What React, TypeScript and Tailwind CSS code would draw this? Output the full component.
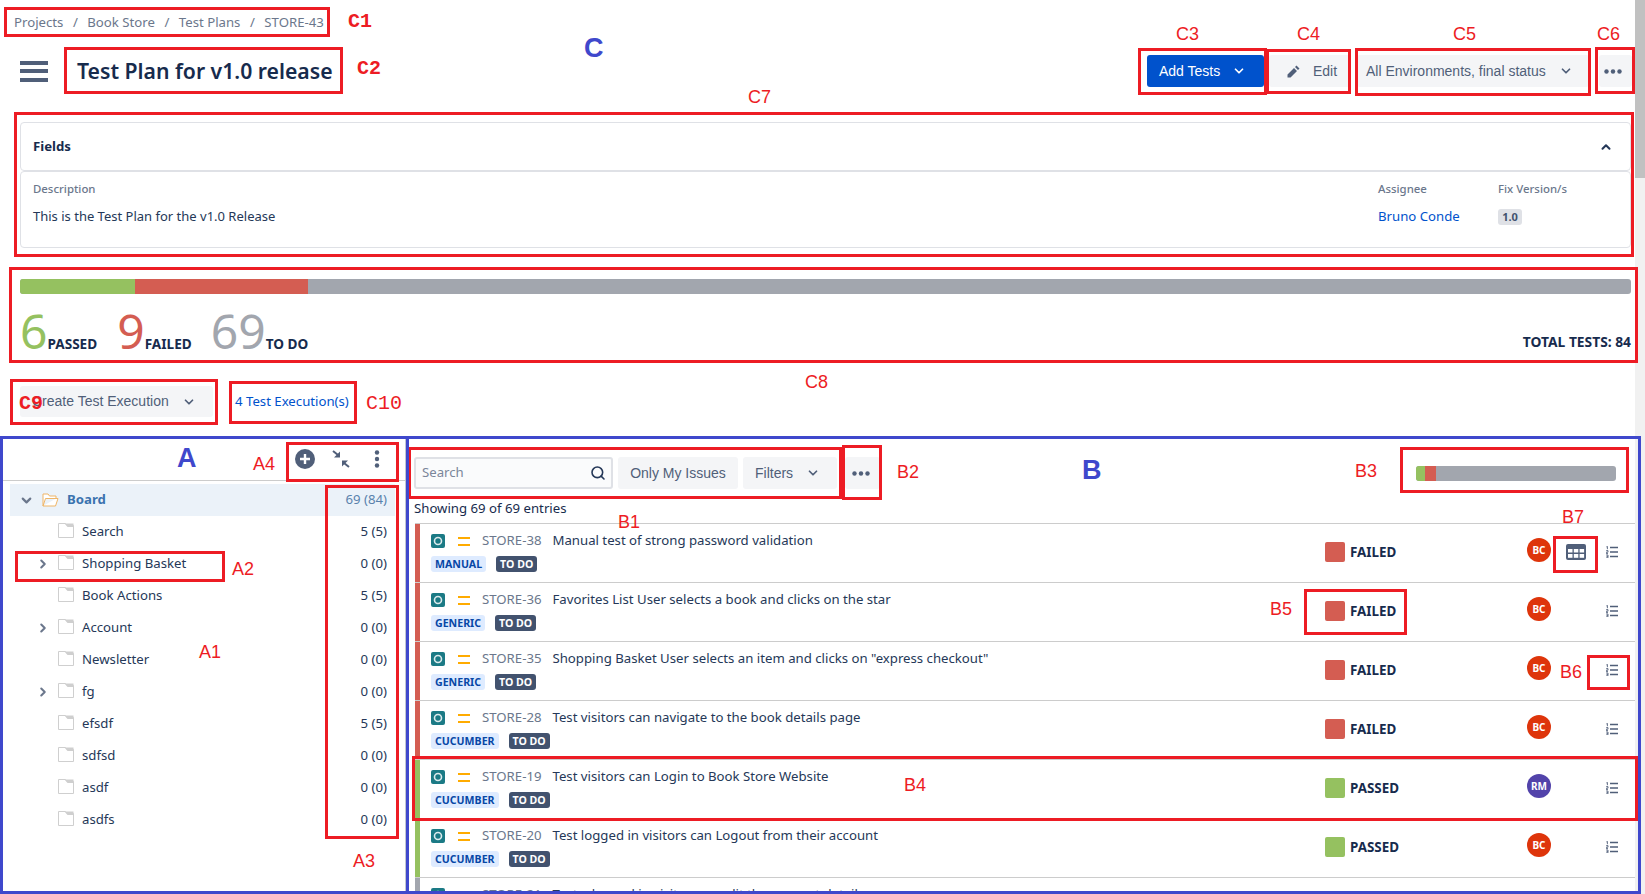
import { ChevronDown, ChevronRight, ChevronUp, Search } from 'lucide-react';

type Row = {
  key: string;
  title: string;
  kind: string;
  status: 'FAILED' | 'PASSED' | 'TO DO';
  user: string;
  grid?: boolean;
};

const rows: Row[] = [
  { key: 'STORE-38', title: 'Manual test of strong password validation', kind: 'MANUAL', status: 'FAILED', user: 'BC', grid: true },
  { key: 'STORE-36', title: 'Favorites List User selects a book and clicks on the star', kind: 'GENERIC', status: 'FAILED', user: 'BC' },
  { key: 'STORE-35', title: 'Shopping Basket User selects an item and clicks on "express checkout"', kind: 'GENERIC', status: 'FAILED', user: 'BC' },
  { key: 'STORE-28', title: 'Test visitors can navigate to the book details page', kind: 'CUCUMBER', status: 'FAILED', user: 'BC' },
  { key: 'STORE-19', title: 'Test visitors can Login to Book Store Website', kind: 'CUCUMBER', status: 'PASSED', user: 'RM' },
  { key: 'STORE-20', title: 'Test logged in visitors can Logout from their account', kind: 'CUCUMBER', status: 'PASSED', user: 'BC' },
  { key: 'STORE-21', title: 'Test a logged in visitor can edit the account details', kind: 'CUCUMBER', status: 'TO DO', user: 'BC' },
];

const folders = [
  { name: 'Search', count: '5 (5)' },
  { name: 'Shopping Basket', count: '0 (0)', more: true },
  { name: 'Book Actions', count: '5 (5)' },
  { name: 'Account', count: '0 (0)', more: true },
  { name: 'Newsletter', count: '0 (0)' },
  { name: 'fg', count: '0 (0)', more: true },
  { name: 'efsdf', count: '5 (5)' },
  { name: 'sdfsd', count: '0 (0)' },
  { name: 'asdf', count: '0 (0)' },
  { name: 'asdfs', count: '0 (0)' },
];

function FolderIcon() {
  return (
    <svg width="16" height="15" viewBox="0 0 16 15" className="shrink-0 mb-[3px]" aria-hidden="true">
      <path d="M.5 .5H7.5L9 2.5H15.5V14.5H.5Z" fill="#fff" stroke="#cfcfcf" />
      <path d="M6.5 .5H15.5V4H9.5Z" fill="#cfcfcf" />
    </svg>
  );
}

function OpenFolderIcon() {
  return (
    <svg width="17" height="14" viewBox="0 0 17 14" className="shrink-0" aria-hidden="true">
      <path d="M1 13V1H6L7.5 3H14V5.5M1 13H13.5L16 5.5H3.5L1 13Z" fill="#fff" stroke="#efb566" strokeWidth="1" />
    </svg>
  );
}

function TestIcon() {
  return (
    <svg width="14" height="14" viewBox="0 0 14 14" className="shrink-0" aria-hidden="true">
      <rect width="14" height="14" rx="2" fill="#1b7a85" />
      <circle cx="7" cy="7" r="3.5" fill="none" stroke="#fff" strokeWidth="1.6" opacity="0.85" />
      <circle cx="7" cy="7" r="1.2" fill="#1b7a85" />
    </svg>
  );
}

function PriorityIcon() {
  return (
    <svg width="12" height="9" viewBox="0 0 12 9" className="shrink-0" aria-hidden="true">
      <rect width="12" height="2" fill="#ffab00" />
      <rect y="7" width="12" height="2" fill="#ffab00" />
    </svg>
  );
}

function GridIcon() {
  return (
    <svg width="20" height="16" viewBox="0 0 20 16" aria-hidden="true">
      <rect width="20" height="16" rx="2" fill="#505f79" />
      <rect x="2" y="5" width="4.5" height="3.5" fill="#fff" />
      <rect x="7.8" y="5" width="4.5" height="3.5" fill="#fff" />
      <rect x="13.6" y="5" width="4.5" height="3.5" fill="#fff" />
      <rect x="2" y="10" width="4.5" height="3.8" fill="#fff" />
      <rect x="7.8" y="10" width="4.5" height="3.8" fill="#fff" />
      <rect x="13.6" y="10" width="4.5" height="3.8" fill="#fff" />
    </svg>
  );
}

function ListIcon() {
  return (
    <svg width="12" height="12" viewBox="0 0 12 12" aria-hidden="true">
      <path d="M.4 .9L1.4 .3V3.2M.2 4.6H2V6.2H.2V7.6H2M.2 9H2V11.8H.2M.5 10.4H2" fill="none" stroke="#505f79" strokeWidth="0.9" />
      <path d="M4 1.5H12M4 6H12M4 10.5H12" stroke="#505f79" strokeWidth="1.6" />
    </svg>
  );
}

function Dots() {
  return (
    <svg width="18" height="5" viewBox="0 0 18 5" aria-hidden="true">
      <circle cx="2.5" cy="2.5" r="2.2" fill="#505f79" />
      <circle cx="9" cy="2.5" r="2.2" fill="#505f79" />
      <circle cx="15.5" cy="2.5" r="2.2" fill="#505f79" />
    </svg>
  );
}

function Box({ className }: { className: string }) {
  return <div className={`absolute border-[3px] border-[#ed1c24] pointer-events-none ${className}`} />;
}

function Label({ className, children }: { className: string; children: string }) {
  return (
    <span className={`absolute leading-none whitespace-nowrap text-[18px] text-[#ed1c24] font-['Liberation_Sans',sans-serif] ${className}`}>
      {children}
    </span>
  );
}

function Annotations() {
  return (
    <>
      <Box className="left-[4px] top-[7px] w-[326px] h-[30px]" />
      <Box className="left-[64px] top-[47px] w-[279px] h-[47px]" />
      <Box className="left-[1138px] top-[48px] w-[129px] h-[47px]" />
      <Box className="left-[1266px] top-[49px] w-[85px] h-[45px]" />
      <Box className="left-[1355px] top-[48px] w-[236px] h-[48px]" />
      <Box className="left-[1595px] top-[47px] w-[40px] h-[47px]" />
      <Box className="left-[14px] top-[112px] w-[1620px] h-[145px]" />
      <Box className="left-[9px] top-[267px] w-[1629px] h-[96px]" />
      <Box className="left-[10px] top-[379px] w-[208px] h-[46px]" />
      <Box className="left-[229px] top-[381px] w-[128px] h-[43px]" />
      <Box className="left-[15px] top-[551px] w-[210px] h-[31px]" />
      <Box className="left-[325px] top-[485px] w-[74px] h-[354px]" />
      <Box className="left-[286px] top-[442px] w-[113px] h-[40px]" />
      <Box className="left-[408px] top-[447px] w-[434px] h-[52px]" />
      <Box className="left-[842px] top-[445px] w-[40px] h-[55px]" />
      <Box className="left-[1400px] top-[447px] w-[229px] h-[46px]" />
      <Box className="left-[412px] top-[756px] w-[1226px] h-[65px]" />
      <Box className="left-[1304px] top-[589px] w-[103px] h-[46px]" />
      <Box className="left-[1587px] top-[655px] w-[43px] h-[35px]" />
      <Box className="left-[1553px] top-[536px] w-[45px] h-[37px]" />

      <div className="absolute left-0 top-[436px] w-[409px] h-[458px] border-[3px] border-[#3f48cc] pointer-events-none" />
      <div className="absolute left-[406px] top-[436px] w-[1235px] h-[458px] border-[3px] border-[#3f48cc] pointer-events-none" />

      <Label className="left-[348px] top-[12px] !text-[20px] font-bold !font-['Liberation_Mono',monospace]">C1</Label>
      <Label className="left-[357px] top-[59px] !text-[20px] font-bold !font-['Liberation_Mono',monospace]">C2</Label>
      <Label className="left-[1176px] top-[25px]">C3</Label>
      <Label className="left-[1297px] top-[25px]">C4</Label>
      <Label className="left-[1453px] top-[25px]">C5</Label>
      <Label className="left-[1597px] top-[25px]">C6</Label>
      <Label className="left-[748px] top-[88px]">C7</Label>
      <Label className="left-[805px] top-[373px]">C8</Label>
      <Label className="left-[19px] top-[394px] !text-[20px] font-bold !font-['Liberation_Mono',monospace]">C9</Label>
      <Label className="left-[366px] top-[394px] !text-[20px] !font-['Liberation_Mono',monospace]">C10</Label>
      <Label className="left-[584px] top-[35px] !text-[27px] font-bold !text-[#3f48cc]">C</Label>
      <Label className="left-[177px] top-[445px] !text-[27px] font-bold !text-[#3f48cc]">A</Label>
      <Label className="left-[1082px] top-[457px] !text-[27px] font-bold !text-[#3f48cc]">B</Label>
      <Label className="left-[253px] top-[455px]">A4</Label>
      <Label className="left-[232px] top-[560px]">A2</Label>
      <Label className="left-[199px] top-[643px]">A1</Label>
      <Label className="left-[353px] top-[852px]">A3</Label>
      <Label className="left-[618px] top-[513px]">B1</Label>
      <Label className="left-[897px] top-[463px]">B2</Label>
      <Label className="left-[1355px] top-[462px]">B3</Label>
      <Label className="left-[904px] top-[776px]">B4</Label>
      <Label className="left-[1270px] top-[600px]">B5</Label>
      <Label className="left-[1560px] top-[663px]">B6</Label>
      <Label className="left-[1562px] top-[508px]">B7</Label>
    </>
  );
}

function TreePanel() {
  return (
    <aside className="w-[406px] shrink-0 border-r border-t border-[#c1c7d0]">
      <div className="h-[44px] border-b border-[#ccc] flex items-center justify-end pr-[25px]">
        <svg width="20" height="20" viewBox="0 0 20 20" aria-hidden="true">
          <circle cx="10" cy="10" r="10" fill="#505f79" />
          <path d="M10 5V15M5 10H15" stroke="#fff" strokeWidth="2.4" />
        </svg>
        <svg width="18" height="18" viewBox="0 0 18 18" className="ml-[17px]" aria-hidden="true">
          <path d="M1 1L6 5" stroke="#505f79" strokeWidth="2" />
          <path d="M8 7.5H2L8 1.5Z" fill="#505f79" />
          <path d="M17 17L12 13" stroke="#505f79" strokeWidth="2" />
          <path d="M10 10.5H16L10 16.5Z" fill="#505f79" />
        </svg>
        <svg width="6" height="18" viewBox="0 0 6 18" className="ml-[24px]" aria-hidden="true">
          <circle cx="3" cy="2.5" r="2.2" fill="#505f79" />
          <circle cx="3" cy="9" r="2.2" fill="#505f79" />
          <circle cx="3" cy="15.5" r="2.2" fill="#505f79" />
        </svg>
      </div>
      <div className="pt-[3px] text-[13.2px] text-[#253858]">
        <div className="mx-[10px] h-[32px] bg-[#ebf2f9] flex items-center pr-[8px]">
          <ChevronDown size={15} strokeWidth={3.5} className="ml-[9px] text-[#6b778c]" />
          <span className="ml-[8px] flex">
            <OpenFolderIcon />
          </span>
          <span className="ml-[8px] font-bold text-[#3b73af]">Board</span>
          <span className="ml-auto text-[#5a82ad]">69 (84)</span>
        </div>
        {folders.map((f) => (
          <div key={f.name} className="mx-[10px] h-[32px] flex items-center pr-[8px]">
            <span className="w-[48px] flex justify-end pr-[8px] shrink-0">
              {f.more && <ChevronRight size={14} strokeWidth={3.5} className="text-[#6b778c]" />}
            </span>
            <FolderIcon />
            <span className="ml-[8px]">{f.name}</span>
            <span className="ml-auto">{f.count}</span>
          </div>
        ))}
      </div>
    </aside>
  );
}

function IssueRow({ row }: { row: Row }) {
  const bar = row.status === 'FAILED' ? 'bg-[#d45d52]' : row.status === 'PASSED' ? 'bg-[#95c160]' : 'bg-[#a2a6ae]';
  return (
    <div className="h-[59px] flex border-t border-[#ccc]">
      <div className={`w-[5px] shrink-0 ${bar}`} />
      <div className="w-[905px] shrink-0 pl-[11px] pt-[9px]">
        <div className="h-[16px] flex items-center">
          <TestIcon />
          <span className="ml-[13px] flex">
            <PriorityIcon />
          </span>
          <span className="ml-[12px] text-[#6b778c]">{row.key}</span>
          <span className="ml-[11px] text-[#253858] whitespace-nowrap">{row.title}</span>
        </div>
        <div className="mt-[7px] h-[16px] flex items-center text-[10.6px] font-bold leading-none">
          <span className="h-[16px] px-[4px] flex items-center rounded-[3px] bg-[#deebff] text-[#0747a6]">{row.kind}</span>
          <span className="ml-[10px] h-[16px] px-[4px] flex items-center rounded-[3px] bg-[#42526e] text-white">TO DO</span>
        </div>
      </div>
      <div className="w-[202px] shrink-0 flex items-center pb-[2px]">
        <span className={`w-[20px] h-[20px] rounded-[2px] ${bar}`} />
        <span className="ml-[5px] text-[13.4px] font-bold text-[#172b4d]">{row.status}</span>
      </div>
      <div className="w-[24px] shrink-0 pt-[14px]">
        <div className={`w-[24px] h-[24px] rounded-full flex items-center justify-center text-[10px] font-bold text-white ${row.user === 'RM' ? 'bg-[#5243aa]' : 'bg-[#de350b]'}`}>
          {row.user}
        </div>
      </div>
      <div className="w-[55px] shrink-0 pl-[15px] flex items-center pb-[2px]">{row.grid && <GridIcon />}</div>
      <div className="flex items-center pb-[2px]">
        <ListIcon />
      </div>
    </div>
  );
}

function TestsPanel() {
  return (
    <section className="flex-1 min-w-0 h-[458px] overflow-hidden text-[13.2px]">
      <div className="pl-[8px] pt-[21px] flex items-center">
        <div className="w-[199px] h-[32px] border-2 border-[#dfe1e6] rounded-[3px] bg-[#fafbfc] flex items-center pl-[6px] pr-[5px]">
          <span className="text-[#7a869a]">Search</span>
          <Search size={16} strokeWidth={2.4} className="ml-auto text-[#253858]" />
        </div>
        <div className="ml-[5px] w-[120px] h-[32px] rounded-[3px] bg-[#f4f5f7] flex items-center justify-center text-[14px] text-[#505f79] font-['Liberation_Sans',sans-serif]">Only My Issues</div>
        <div className="ml-[5px] w-[94px] h-[32px] rounded-[3px] bg-[#f4f5f7] flex items-center pl-[12px] text-[14px] text-[#505f79] font-['Liberation_Sans',sans-serif]">
          Filters
          <ChevronDown size={14} strokeWidth={3} className="ml-[13px]" />
        </div>
        <div className="ml-[8px] w-[35px] h-[32px] rounded-[3px] bg-[#f4f5f7] flex items-center justify-center pr-[4px]">
          <Dots />
        </div>
        <div className="ml-auto mr-[19px] w-[200px] h-[15px] rounded-[3px] overflow-hidden flex bg-[#a2a6ae]">
          <div className="w-[9px] bg-[#95c160]" />
          <div className="w-[11px] bg-[#d45d52]" />
        </div>
      </div>
      <div className="pl-[8px] pt-[5px] h-[34px] flex items-center text-[#172b4d]">Showing 69 of 69 entries</div>
      <div className="ml-[9px]">
        {rows.map((r) => (
          <IssueRow key={r.key} row={r} />
        ))}
      </div>
    </section>
  );
}

export default function App() {
  return (
    <div className="relative w-[1645px] h-[894px] overflow-hidden bg-white flex font-['Noto_Sans',sans-serif] text-[13.2px] text-[#172b4d]">
      <main className="w-[1635px] shrink-0">
        <nav className="h-[46px] pl-[14px] pb-[1px] flex items-center gap-[9.5px] text-[#6b778c]">
          <span>Projects</span>
          <span>/</span>
          <span>Book Store</span>
          <span>/</span>
          <span>Test Plans</span>
          <span>/</span>
          <span>STORE-43</span>
        </nav>

        <header className="h-[50px] flex items-center pr-[3px]">
          <div className="ml-[20px] w-[28px] h-[21px] flex flex-col justify-between">
            <span className="h-[4px] bg-[#505f79]" />
            <span className="h-[4px] bg-[#505f79]" />
            <span className="h-[4px] bg-[#505f79]" />
          </div>
          <h1 className="ml-[29px] text-[21.2px] font-semibold text-[#172b4d]">Test Plan for v1.0 release</h1>
          <div className="ml-auto flex items-center font-['Liberation_Sans',sans-serif] text-[14px]">
            <button className="w-[117px] h-[32px] rounded-[3px] bg-[#0052cc] text-white flex items-center pl-[12px]">
              Add Tests
              <ChevronDown size={14} strokeWidth={3} className="ml-[12px]" />
            </button>
            <button className="ml-[5px] w-[81px] h-[32px] rounded-[3px] bg-[#f4f5f7] text-[#505f79] flex items-center pl-[18px]">
              <svg width="13" height="13" viewBox="0 0 13 13" aria-hidden="true">
                <path d="M9.5 .5L12.5 3.5L11 5L8 2ZM7 3L10 6L3.5 12.5L.5 12.5L.5 9.5Z" fill="#505f79" />
              </svg>
              <span className="ml-[13px]">Edit</span>
            </button>
            <button className="ml-[7px] w-[232px] h-[32px] rounded-[3px] bg-[#f4f5f7] text-[#505f79] flex items-center pl-[9px]">
              All Environments, final status
              <ChevronDown size={14} strokeWidth={3} className="ml-[13px]" />
            </button>
            <button className="ml-[10px] w-[33px] h-[32px] rounded-[3px] bg-[#f4f5f7] flex items-center justify-center pr-[6px]">
              <Dots />
            </button>
          </div>
        </header>

        <section className="mt-[26px] ml-[20px] w-[1611px]">
          <div className="h-[49px] border border-[#dfe1e6] rounded-[4px] flex items-center justify-between pl-[12px] pr-[17px]">
            <span className="font-bold">Fields</span>
            <ChevronUp size={14} strokeWidth={3.5} className="text-[#253858]" />
          </div>
          <div className="h-[77px] border border-[#dfe1e6] rounded-[4px] flex pl-[12px] pt-[8px] text-[#253858]">
            <div className="flex-1">
              <div className="text-[11.4px] text-[#6b778c] font-medium h-[18px] flex items-center">Description</div>
              <div className="mt-[10px] h-[18px] flex items-center text-[13px]">This is the Test Plan for the v1.0 Release</div>
            </div>
            <div className="w-[120px]">
              <div className="text-[11.4px] text-[#6b778c] font-medium h-[18px] flex items-center">Assignee</div>
              <div className="mt-[10px] h-[18px] flex items-center text-[#0052cc]">Bruno Conde</div>
            </div>
            <div className="w-[132px]">
              <div className="text-[11.4px] text-[#6b778c] font-medium h-[18px] flex items-center">Fix Version/s</div>
              <div className="mt-[11px] w-[24px] h-[16px] rounded-[3px] bg-[#dfe1e6] flex items-center justify-center text-[11px] font-bold text-[#42526e]">1.0</div>
            </div>
          </div>
        </section>

        <div className="mt-[31px] ml-[20px] w-[1611px] h-[15px] rounded-[3px] overflow-hidden flex bg-[#a2a6ae]">
          <div className="w-[115px] bg-[#95c160]" />
          <div className="w-[173px] bg-[#d45d52]" />
        </div>

        <div className="ml-[20px] w-[1611px] h-[68px] flex items-end justify-between">
          <div className="flex items-baseline text-[48px] leading-[48px] mb-[7px]">
            <span className="text-[#95c160]">6</span>
            <span className="text-[13.6px] leading-[18px] font-bold mr-[20px]">PASSED</span>
            <span className="text-[#d45d52]">9</span>
            <span className="text-[13.6px] leading-[18px] font-bold mr-[19px]">FAILED</span>
            <span className="text-[#a2a6ae]">69</span>
            <span className="text-[13.6px] leading-[18px] font-bold">TO DO</span>
          </div>
          <span className="text-[13.8px] font-bold mb-[11px] leading-[18px]">TOTAL TESTS: 84</span>
        </div>

        <div className="mt-[24px] ml-[20px] h-[31px] flex items-center">
          <button className="w-[193px] h-[31px] rounded-[3px] bg-[#f4f5f7] text-[14px] text-[#505f79] flex items-center pl-[12px] font-['Liberation_Sans',sans-serif]">
            Create Test Execution
            <ChevronDown size={14} strokeWidth={3} className="ml-[13px]" />
          </button>
          <span className="ml-[22px] text-[#0052cc]">4 Test Execution(s)</span>
        </div>

        <div className="mt-[19px] flex">
          <TreePanel />
          <TestsPanel />
        </div>
      </main>

      <div className="w-[10px] shrink-0 bg-[#f1f1f1]">
        <div className="h-[178px] bg-[#c1c1c1]" />
      </div>

      <Annotations />
    </div>
  );
}
